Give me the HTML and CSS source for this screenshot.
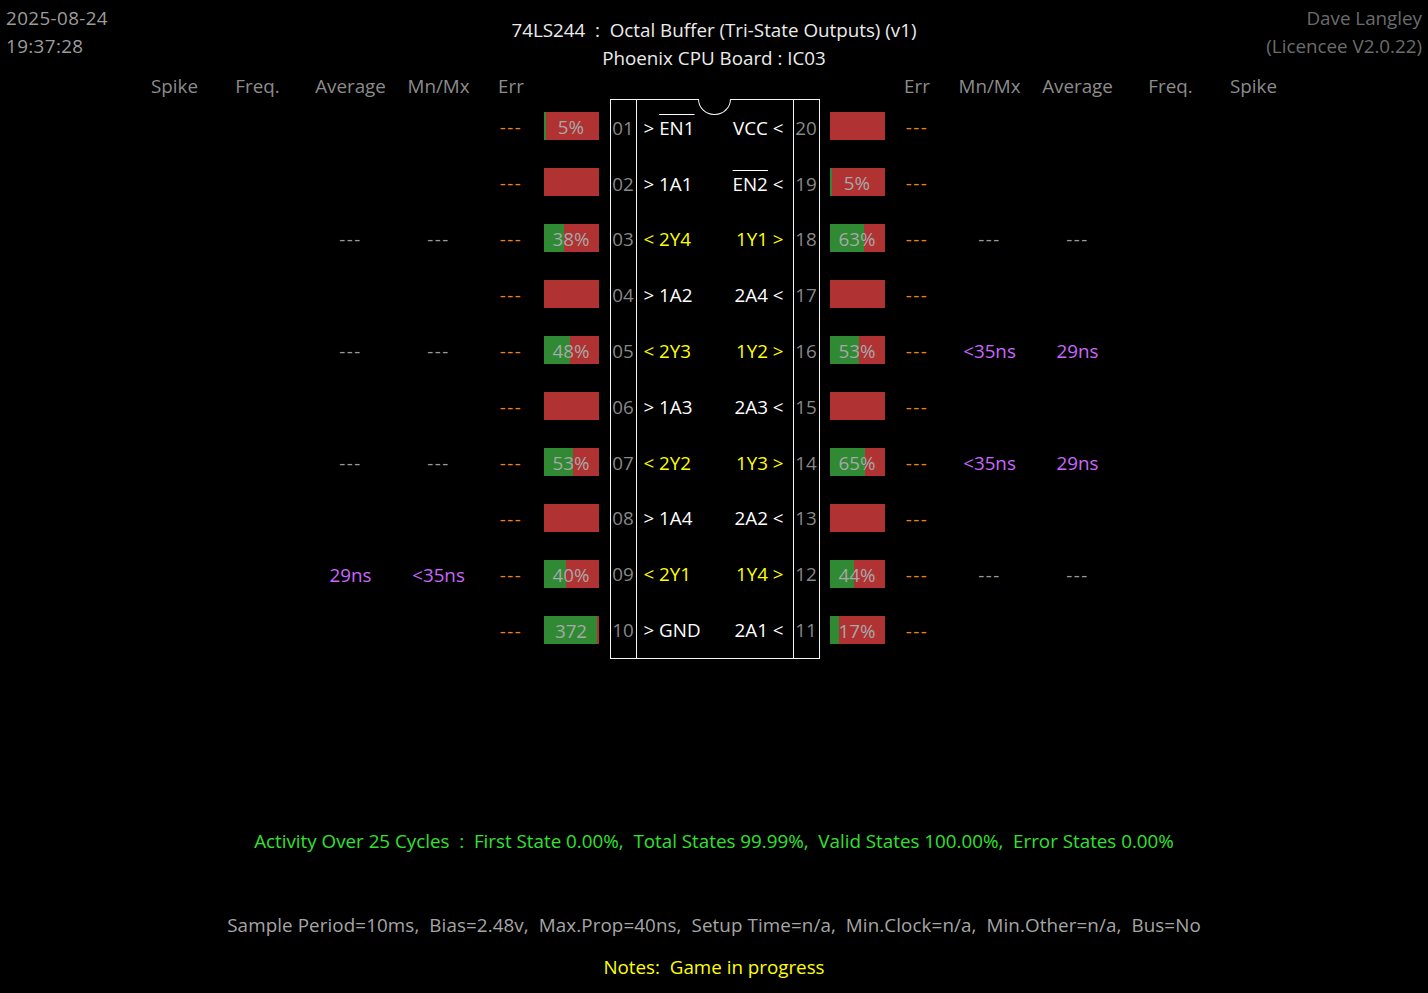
FILE: index.html
```html
<!DOCTYPE html>
<html>
<head>
<meta charset="utf-8">
<link rel="stylesheet" href="styles.css">
</head>
<body>
<header class="top">
  <div class="stamp">2025-08-24<br>19:37:28</div>
  <div class="title">74LS244&nbsp; :&nbsp; Octal Buffer (Tri-State Outputs) (v1)<br>Phoenix CPU Board : IC03</div>
  <div class="licence">Dave Langley<br>(Licencee V2.0.22)</div>
</header>

<main class="board">
  <div class="hd">Spike</div><div class="hd">Freq.</div><div class="hd">Average</div><div class="hd">Mn/Mx</div><div class="hd">Err</div><div class="hd"></div>
  <div class="hd chipgap"></div>
  <div class="hd"></div><div class="hd">Err</div><div class="hd">Mn/Mx</div><div class="hd">Average</div><div class="hd">Freq.</div><div class="hd">Spike</div>

  <div class="chip">
    <span class="notch"></span>
    <div class="pin">01</div><div class="lbl"><span class="in">&gt; <span class="ov">EN1</span></span><span class="in">VCC &lt;</span></div><div class="pin">20</div>
    <div class="pin">02</div><div class="lbl"><span class="in">&gt; 1A1</span><span class="in"><span class="ov">EN2</span> &lt;</span></div><div class="pin">19</div>
    <div class="pin">03</div><div class="lbl"><span class="out">&lt; 2Y4</span><span class="out">1Y1 &gt;</span></div><div class="pin">18</div>
    <div class="pin">04</div><div class="lbl"><span class="in">&gt; 1A2</span><span class="in">2A4 &lt;</span></div><div class="pin">17</div>
    <div class="pin">05</div><div class="lbl"><span class="out">&lt; 2Y3</span><span class="out">1Y2 &gt;</span></div><div class="pin">16</div>
    <div class="pin">06</div><div class="lbl"><span class="in">&gt; 1A3</span><span class="in">2A3 &lt;</span></div><div class="pin">15</div>
    <div class="pin">07</div><div class="lbl"><span class="out">&lt; 2Y2</span><span class="out">1Y3 &gt;</span></div><div class="pin">14</div>
    <div class="pin">08</div><div class="lbl"><span class="in">&gt; 1A4</span><span class="in">2A2 &lt;</span></div><div class="pin">13</div>
    <div class="pin">09</div><div class="lbl"><span class="out">&lt; 2Y1</span><span class="out">1Y4 &gt;</span></div><div class="pin">12</div>
    <div class="pin">10</div><div class="lbl"><span class="in">&gt; GND</span><span class="in">2A1 &lt;</span></div><div class="pin">11</div>
  </div>

  <!-- row 1 -->
  <div class="c"></div><div class="c"></div><div class="c"></div><div class="c"></div><div class="c err">---</div>
  <div class="c"><div class="bar"><div class="g" style="width:5%"></div><span>5%</span></div></div>
  <div class="c"><div class="bar"><div class="g" style="width:0%"></div><span></span></div></div>
  <div class="c err">---</div><div class="c"></div><div class="c"></div><div class="c"></div><div class="c"></div>
  <!-- row 2 -->
  <div class="c"></div><div class="c"></div><div class="c"></div><div class="c"></div><div class="c err">---</div>
  <div class="c"><div class="bar"><div class="g" style="width:0%"></div><span></span></div></div>
  <div class="c"><div class="bar"><div class="g" style="width:5%"></div><span>5%</span></div></div>
  <div class="c err">---</div><div class="c"></div><div class="c"></div><div class="c"></div><div class="c"></div>
  <!-- row 3 -->
  <div class="c"></div><div class="c"></div><div class="c dim">---</div><div class="c dim">---</div><div class="c err">---</div>
  <div class="c"><div class="bar"><div class="g" style="width:38%"></div><span>38%</span></div></div>
  <div class="c"><div class="bar"><div class="g" style="width:63%"></div><span>63%</span></div></div>
  <div class="c err">---</div><div class="c dim">---</div><div class="c dim">---</div><div class="c"></div><div class="c"></div>
  <!-- row 4 -->
  <div class="c"></div><div class="c"></div><div class="c"></div><div class="c"></div><div class="c err">---</div>
  <div class="c"><div class="bar"><div class="g" style="width:0%"></div><span></span></div></div>
  <div class="c"><div class="bar"><div class="g" style="width:0%"></div><span></span></div></div>
  <div class="c err">---</div><div class="c"></div><div class="c"></div><div class="c"></div><div class="c"></div>
  <!-- row 5 -->
  <div class="c"></div><div class="c"></div><div class="c dim">---</div><div class="c dim">---</div><div class="c err">---</div>
  <div class="c"><div class="bar"><div class="g" style="width:48%"></div><span>48%</span></div></div>
  <div class="c"><div class="bar"><div class="g" style="width:53%"></div><span>53%</span></div></div>
  <div class="c err">---</div><div class="c ns">&lt;35ns</div><div class="c ns">29ns</div><div class="c"></div><div class="c"></div>
  <!-- row 6 -->
  <div class="c"></div><div class="c"></div><div class="c"></div><div class="c"></div><div class="c err">---</div>
  <div class="c"><div class="bar"><div class="g" style="width:0%"></div><span></span></div></div>
  <div class="c"><div class="bar"><div class="g" style="width:0%"></div><span></span></div></div>
  <div class="c err">---</div><div class="c"></div><div class="c"></div><div class="c"></div><div class="c"></div>
  <!-- row 7 -->
  <div class="c"></div><div class="c"></div><div class="c dim">---</div><div class="c dim">---</div><div class="c err">---</div>
  <div class="c"><div class="bar"><div class="g" style="width:53%"></div><span>53%</span></div></div>
  <div class="c"><div class="bar"><div class="g" style="width:65%"></div><span>65%</span></div></div>
  <div class="c err">---</div><div class="c ns">&lt;35ns</div><div class="c ns">29ns</div><div class="c"></div><div class="c"></div>
  <!-- row 8 -->
  <div class="c"></div><div class="c"></div><div class="c"></div><div class="c"></div><div class="c err">---</div>
  <div class="c"><div class="bar"><div class="g" style="width:0%"></div><span></span></div></div>
  <div class="c"><div class="bar"><div class="g" style="width:0%"></div><span></span></div></div>
  <div class="c err">---</div><div class="c"></div><div class="c"></div><div class="c"></div><div class="c"></div>
  <!-- row 9 -->
  <div class="c"></div><div class="c"></div><div class="c ns">29ns</div><div class="c ns">&lt;35ns</div><div class="c err">---</div>
  <div class="c"><div class="bar"><div class="g" style="width:40%"></div><span>40%</span></div></div>
  <div class="c"><div class="bar"><div class="g" style="width:44%"></div><span>44%</span></div></div>
  <div class="c err">---</div><div class="c dim">---</div><div class="c dim">---</div><div class="c"></div><div class="c"></div>
  <!-- row 10 -->
  <div class="c"></div><div class="c"></div><div class="c"></div><div class="c"></div><div class="c err">---</div>
  <div class="c"><div class="bar"><div class="g" style="width:98%"></div><span>372</span></div></div>
  <div class="c"><div class="bar"><div class="g" style="width:17%"></div><span>17%</span></div></div>
  <div class="c err">---</div><div class="c"></div><div class="c"></div><div class="c"></div><div class="c"></div>
</main>

<footer class="foot">
  <div class="activity">Activity Over 25 Cycles&nbsp; :&nbsp; First State 0.00%,&nbsp; Total States 99.99%,&nbsp; Valid States 100.00%,&nbsp; Error States 0.00%</div>
  <div class="sample">Sample Period=10ms,&nbsp; Bias=2.48v,&nbsp; Max.Prop=40ns,&nbsp; Setup Time=n/a,&nbsp; Min.Clock=n/a,&nbsp; Min.Other=n/a,&nbsp; Bus=No</div>
  <div class="notes">Notes:&nbsp; Game in progress</div>
</footer>
</body>
</html>
```

FILE: styles.css
```css
html, body {
  margin: 0;
  padding: 0;
  background: #000;
}
body {
  width: 1428px;
  height: 993px;
  overflow: hidden;
  font-family: "Open Sans", "Noto Sans", sans-serif;
  font-size: 18.8px;
  line-height: 28px;
  color: #a0a0a0;
}

.top {
  display: grid;
  grid-template-columns: 1fr auto 1fr;
  padding: 4px 6px 0 6px;
  height: 69px;
}
.stamp { color: #9c9c9c; letter-spacing: 0.4px; }
.title {
  color: #ececec;
  text-align: center;
  padding-top: 12px;
}
.licence {
  color: #6c6c6c;
  text-align: right;
}

.board {
  display: grid;
  grid-template-columns: 76px 90px 96px 80px 65px 55px 231px 55px 65px 80px 96px 90px 76px;
  grid-template-rows: 26px repeat(10, 56px);
  justify-content: center;
}
.board > .chipgap { grid-column: 7; }

.hd {
  color: #8c8c8c;
  text-align: center;
  line-height: 26px;
}

.c {
  display: flex;
  align-items: center;
  justify-content: center;
  white-space: nowrap;
}
.c.err { color: #e8821e; letter-spacing: 1.5px; }
.c.dim { color: #9a9a9a; letter-spacing: 1.5px; }
.c.ns { color: #cc66ff; }

.bar {
  position: relative;
  width: 55px;
  height: 28px;
  background: #b03232;
  margin-top: -2px;
}
.bar .g {
  height: 100%;
  background: #2f8a33;
}
.bar span {
  position: absolute;
  inset: 0;
  text-align: center;
  line-height: 31px;
  color: #a8a8a8;
}

.chip {
  grid-column: 7;
  grid-row: 2 / span 10;
  margin: 0 10px 0 11px;
  position: relative;
  border: 1px solid #f4f4f4;
  display: grid;
  grid-template-columns: 26px 1fr 26px;
  grid-template-rows: repeat(10, 1fr);
}
.notch {
  position: absolute;
  top: -1px;
  left: 87px;
  width: 31px;
  height: 15px;
  border: 1px solid #f4f4f4;
  border-top: none;
  border-radius: 0 0 17px 17px;
  background: #000;
}
.pin {
  color: #888;
  display: flex;
  align-items: center;
  justify-content: center;
}
.chip > .pin:nth-child(3n + 2) { border-right: 1px solid #f4f4f4; }
.chip > .pin:nth-child(3n + 4) { border-left: 1px solid #f4f4f4; }
.lbl {
  display: flex;
  justify-content: space-between;
  align-items: center;
  padding: 0 9px 0 7px;
}
.in { color: #ffffff; }
.out { color: #ffff00; }
.ov {
  text-decoration: overline;
  text-decoration-thickness: 1px;
}

.foot {
  text-align: center;
  padding-top: 168px;
}
.activity { color: #33e033; }
.sample { color: #a6a6a6; margin-top: 56px; letter-spacing: 0.1px; }
.notes { color: #ffff00; margin-top: 14px; }
```
